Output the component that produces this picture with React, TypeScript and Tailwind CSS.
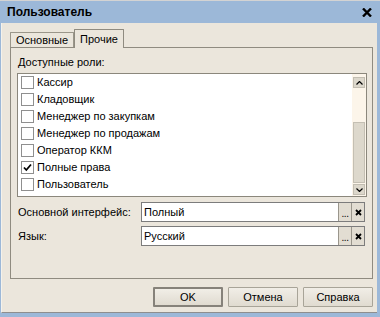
import React from "react";

const font = { fontFamily: '"Liberation Sans", Arial, sans-serif' };

function Checkbox({ checked }: { checked?: boolean }) {
  return (
    <div className="w-[13px] h-[13px] border border-[#8f8f8f] bg-white flex items-center justify-center shrink-0">
      {checked && (
        <svg width="9" height="9" viewBox="0 0 9 9">
          <polyline points="1,4.5 3.3,7 8,1.5" fill="none" stroke="#000" strokeWidth="1.8" />
        </svg>
      )}
    </div>
  );
}

function Row({ label, checked }: { label: string; checked?: boolean }) {
  return (
    <div className="h-[17px] flex items-center pl-[3px] gap-[3px] shrink-0">
      <Checkbox checked={checked} />
      <span className="text-[11px] leading-[13px] text-black whitespace-nowrap">{label}</span>
    </div>
  );
}

function Field({ label, value }: { label: string; value: string }) {
  return (
    <div className="flex items-center h-[20px]">
      <div className="w-[124px] text-[11px] leading-[13px] pl-[1px]">{label}</div>
      <div className="flex h-[20px] w-[224px] border border-[#7c7c7c] bg-white">
        <div className="flex-1 flex items-center pl-[2px] text-[11px] leading-[13px]">{value}</div>
        <div className="w-[13px] h-full bg-[#e2ddd2] border-l border-[#9a968c] flex items-end justify-center pb-[4px]">
          <span className="text-[10px] leading-[6px] tracking-[-0.5px]">...</span>
        </div>
        <div className="w-[13px] h-full bg-[#e2ddd2] border-l border-[#9a968c] flex items-center justify-center">
          <svg width="7" height="7" viewBox="0 0 7 7">
            <path d="M1 1 L6 6 M6 1 L1 6" stroke="#000" strokeWidth="1.8" />
          </svg>
        </div>
      </div>
    </div>
  );
}

function Btn({ label, def }: { label: string; def?: boolean }) {
  return (
    <div
      className={
        "w-[70px] h-[20px] flex items-center justify-center text-[11px] leading-[13px] bg-gradient-to-b from-[#f1eee7] to-[#e0dbd0] rounded-[1px] " +
        (def ? "border-2 border-[#86827a]" : "border border-[#a8a498]")
      }
    >
      {label}
    </div>
  );
}

export default function App() {
  const roles = [
    "Кассир",
    "Кладовщик",
    "Менеджер по закупкам",
    "Менеджер по продажам",
    "Оператор ККМ",
    "Полные права",
    "Пользователь",
  ];
  return (
    <div style={font} className="w-[380px] h-[317px] flex flex-col bg-[#9cb8d8] border-t border-[#d3d3d3] text-black">
      <div className="h-[22px] flex items-center pl-[7px] pr-[8px] justify-between shrink-0">
        <span className="text-[12px] font-bold leading-[14px]">Пользователь</span>
        <svg width="10" height="9" viewBox="0 0 10 9">
          <path d="M1 0.5 L9 8.5 M9 0.5 L1 8.5" stroke="#000" strokeWidth="2.4" />
        </svg>
      </div>
      <div className="flex-1 ml-[1px] mr-[3px] mb-[4px] border-l border-[#f4f2ec] border-b border-b-[#8e8e8e] bg-[#ebe6dc] flex flex-col pl-[8px] pr-[4px] pt-[6px]">
        <div className="h-[18px] flex items-end text-[11px] leading-[13px] shrink-0">
          <div className="h-[15px] w-[64px] border border-b-0 border-[#9a968a] flex items-center justify-center rounded-t-[1px]">
            Основные
          </div>
          <div className="h-[19px] w-[50px] border border-b-0 border-[#8f8b80] bg-[#ebe6dc] flex items-center justify-center -mb-[1px] relative z-10 rounded-t-[1px]">
            Прочие
          </div>
        </div>
        <div className="h-[232px] border border-[#8f8b80] flex flex-col pl-[6px] pr-[5px] shrink-0">
          <div className="mt-[8px] h-[13px] text-[11px] leading-[13px] pl-[1px]">Доступные роли:</div>
          <div className="mt-[4px] h-[124px] border border-[#8b877c] bg-white flex">
            <div className="flex-1 flex flex-col overflow-hidden">
              {roles.map((r) => (
                <Row key={r} label={r} checked={r === "Полные права"} />
              ))}
            </div>
            <div className="w-[14px] bg-[#fcf5ea] flex flex-col items-center pt-[3px] pb-[1px]">
              <div className="w-[12px] h-[11px] bg-[#dcd7cb] border border-[#c2bdb1] flex items-center justify-center">
                <svg width="7" height="4" viewBox="0 0 7 4">
                  <path d="M0.5 3.5 L3.5 0.5 L6.5 3.5" fill="none" stroke="#000" strokeWidth="1.2" />
                </svg>
              </div>
              <div className="flex-1 w-full" />
              <div className="w-[12px] h-[61px] bg-[#ddd8cc] border border-[#c4bfb3]" />
              <div className="w-[12px] h-[11px] mt-[1px] bg-[#dcd7cb] border border-[#c2bdb1] flex items-center justify-center">
                <svg width="7" height="4" viewBox="0 0 7 4">
                  <path d="M0.5 0.5 L3.5 3.5 L6.5 0.5" fill="none" stroke="#000" strokeWidth="1.2" />
                </svg>
              </div>
            </div>
          </div>
          <div className="mt-[5px] flex flex-col gap-[4px]">
            <Field label="Основной интерфейс:" value="Полный" />
            <Field label="Язык:" value="Русский" />
          </div>
        </div>
        <div className="mt-[8px] flex justify-end gap-[5px] shrink-0">
          <Btn label="OK" def />
          <Btn label="Отмена" />
          <Btn label="Справка" />
        </div>
      </div>
    </div>
  );
}
